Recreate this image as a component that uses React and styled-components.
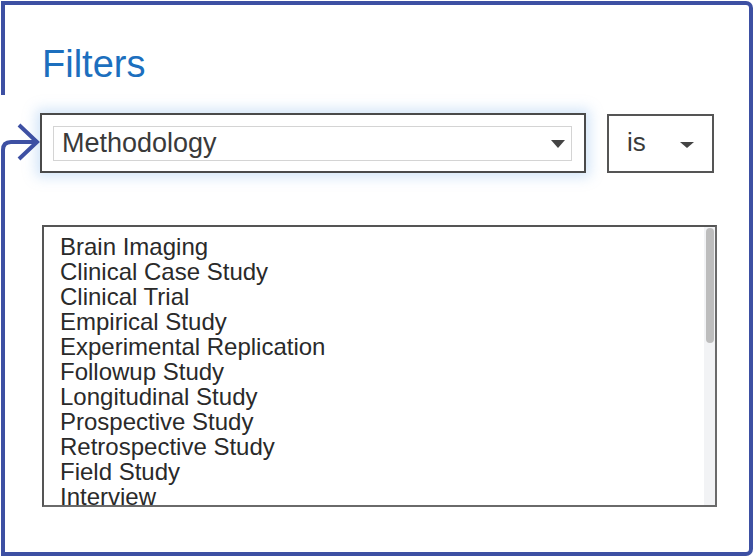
import React from 'react';
import styled, { createGlobalStyle } from 'styled-components';

const GlobalStyle = createGlobalStyle`
  html, body {
    margin: 0;
    padding: 0;
    background: #ffffff;
  }
  body {
    font-family: "Liberation Sans", Arial, sans-serif;
    width: 754px;
    height: 559px;
    overflow: hidden;
  }
`;

const BLUE = '#3d50a3';

const methods = [
  'Brain Imaging',
  'Clinical Case Study',
  'Clinical Trial',
  'Empirical Study',
  'Experimental Replication',
  'Followup Study',
  'Longitudinal Study',
  'Prospective Study',
  'Retrospective Study',
  'Field Study',
  'Interview',
];

const Frame = styled.div`
  position: relative;
  box-sizing: border-box;
  margin: 1px 0 0 1px;
  width: 752px;
  height: 555px;
  border: 4px solid ${BLUE};
  border-left: none;
  border-radius: 0 7px 7px 0;
  padding: 0 0 0 39px;
`;

const Connector = styled.svg`
  position: absolute;
  left: -1px;
  top: -5px;
  pointer-events: none;
`;

const Title = styled.h2`
  margin: 37px 0 0 2px;
  font-size: 38px;
  line-height: 44px;
  font-weight: normal;
  color: #1c6fbe;
`;

const Row = styled.div`
  display: flex;
  align-items: flex-start;
  gap: 21px;
  margin: 27px 0 0 0;
`;

const FieldSelect = styled.div`
  box-sizing: border-box;
  width: 546px;
  height: 60px;
  border: 2px solid #4a4a4a;
  padding: 11px 12px 10px 11px;
  background: #fff;
  box-shadow: 0 0 12px 4px rgba(130, 180, 235, 0.35);
`;

const FieldInner = styled.div`
  box-sizing: border-box;
  height: 100%;
  border: 1px solid #d4d4d4;
  display: flex;
  align-items: center;
  justify-content: space-between;
  padding: 0 6px 1px 8px;
  font-size: 27px;
  color: #3a3a3a;
`;

const Caret = styled.span`
  width: 0;
  height: 0;
  border-left: ${p => p.$w / 2}px solid transparent;
  border-right: ${p => p.$w / 2}px solid transparent;
  border-top: ${p => p.$h}px solid #444;
  margin-top: ${p => p.$dy || 0}px;
`;

const OpSelect = styled.div`
  box-sizing: border-box;
  width: 107px;
  height: 59px;
  margin-top: 1px;
  border: 2px solid #555;
  display: flex;
  align-items: center;
  justify-content: space-between;
  padding: 0 18px 2px 18px;
  font-size: 26px;
  color: #3a3a3a;
`;

const ListBox = styled.div`
  position: relative;
  box-sizing: border-box;
  margin: 52px 0 0 2px;
  width: 675px;
  height: 282px;
  border: 2px solid #555;
  border-right-color: #6a6a6a;
  border-bottom-color: #6a6a6a;
  overflow: hidden;
`;

const Items = styled.ul`
  list-style: none;
  margin: 0;
  padding: 7px 0 0 16px;
`;

const Item = styled.li`
  font-size: 24px;
  line-height: 25px;
  color: #2a2a2a;
  white-space: nowrap;
`;

const Track = styled.div`
  position: absolute;
  top: 0;
  right: 0;
  bottom: 0;
  width: 11px;
  background: #f2f3f5;
`;

const Thumb = styled.div`
  margin: 1px 1px 0 2px;
  height: 115px;
  border-radius: 4px;
  background: #bdbdbd;
`;

export default function App() {
  return (
    <>
      <GlobalStyle />
      <Frame>
        <Connector width="45" height="559" viewBox="0 0 45 559">
          <path d="M3 1 V95" stroke={BLUE} strokeWidth="4" fill="none" />
          <path
            d="M3 556 V150 Q3 142 11 142 H36"
            stroke={BLUE}
            strokeWidth="4"
            fill="none"
          />
          <path
            d="M19 125 L37 142 L19 159"
            stroke={BLUE}
            strokeWidth="4"
            fill="none"
          />
        </Connector>
        <Title>Filters</Title>
        <Row>
          <FieldSelect>
            <FieldInner>
              <span>Methodology</span>
              <Caret $w={15} $h={8} $dy={2} />
            </FieldInner>
          </FieldSelect>
          <OpSelect>
            <span>is</span>
            <Caret $w={14} $h={6} $dy={4} />
          </OpSelect>
        </Row>
        <ListBox>
          <Items>
            {methods.map(m => (
              <Item key={m}>{m}</Item>
            ))}
          </Items>
          <Track>
            <Thumb />
          </Track>
        </ListBox>
      </Frame>
    </>
  );
}
